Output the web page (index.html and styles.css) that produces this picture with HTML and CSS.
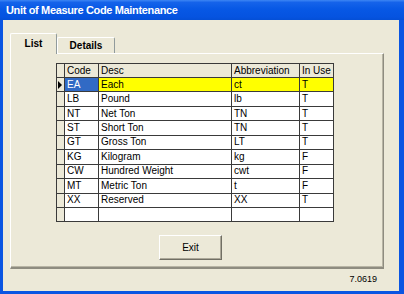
FILE: index.html
```
<!DOCTYPE html>
<html>
<head>
<meta charset="utf-8">
<link rel="stylesheet" href="styles.css">
</head>
<body>
<div class="window">
  <div class="titlebar">Unit of Measure Code Maintenance</div>
  <div class="frame">
    <div class="client">
      <div class="tabs">
        <div class="tab active">List</div>
        <div class="tab">Details</div>
      </div>
      <div class="panel">
        <table class="grid">
          <colgroup>
            <col class="c-ind"><col class="c-code"><col class="c-desc"><col class="c-abbr"><col class="c-use">
          </colgroup>
          <thead>
            <tr><th class="ind"></th><th>Code</th><th>Desc</th><th>Abbreviation</th><th>In Use</th></tr>
          </thead>
          <tbody>
            <tr class="sel"><td class="ind"><span class="arrow"></span></td><td class="cur">EA</td><td class="hl">Each</td><td class="hl">ct</td><td class="hl">T</td></tr>
            <tr><td class="ind"></td><td>LB</td><td>Pound</td><td>lb</td><td>T</td></tr>
            <tr><td class="ind"></td><td>NT</td><td>Net Ton</td><td>TN</td><td>T</td></tr>
            <tr><td class="ind"></td><td>ST</td><td>Short Ton</td><td>TN</td><td>T</td></tr>
            <tr><td class="ind"></td><td>GT</td><td>Gross Ton</td><td>LT</td><td>T</td></tr>
            <tr><td class="ind"></td><td>KG</td><td>Kilogram</td><td>kg</td><td>F</td></tr>
            <tr><td class="ind"></td><td>CW</td><td>Hundred Weight</td><td>cwt</td><td>F</td></tr>
            <tr><td class="ind"></td><td>MT</td><td>Metric Ton</td><td>t</td><td>F</td></tr>
            <tr><td class="ind"></td><td>XX</td><td>Reserved</td><td>XX</td><td>T</td></tr>
            <tr><td class="ind"></td><td></td><td></td><td></td><td></td></tr>
          </tbody>
        </table>
        <button class="btn">Exit</button>
      </div>
      <div class="version">7.0619</div>
    </div>
  </div>
</div>
</body>
</html>
```
FILE: styles.css
```
html, body {
  margin: 0;
  padding: 0;
  background: #0a55e2;
}
.window {
  width: 404px;
  height: 294px;
  display: flex;
  flex-direction: column;
  background: #0a55e2;
  font-family: "Liberation Sans", Arial, sans-serif;
  overflow: hidden;
}
.titlebar {
  height: 20px;
  line-height: 20px;
  padding-left: 6px;
  color: #ffffff;
  font-weight: bold;
  font-size: 11px;
  letter-spacing: -0.35px;
  background: linear-gradient(to bottom, #3d86f4 0%, #1563ea 12%, #0758e5 45%, #0553e0 85%, #044fd6 100%);
}
.frame {
  flex: 1;
  display: flex;
  padding: 0 5px 3px 3px;
}
.client {
  flex: 1;
  background: #ece9d8;
  padding: 13px 0 0 7px;
}
.tabs {
  display: flex;
  align-items: flex-end;
  height: 20px;
  position: relative;
  z-index: 2;
}
.tab {
  box-sizing: border-box;
  background: #ece9d8;
  border-left: 1px solid #ffffff;
  border-top: 1px solid #ffffff;
  border-right: 1px solid #919b9c;
  border-radius: 2px 2px 0 0;
  font-size: 10px;
  font-weight: bold;
  color: #000;
  display: flex;
  align-items: center;
  justify-content: center;
  width: 58px;
  height: 16px;
}
.tab.active {
  width: 47px;
  height: 21px;
  margin-bottom: -1px;
  padding-bottom: 2px;
}
.panel {
  box-sizing: border-box;
  width: 374px;
  height: 216px;
  border-top: 1px solid #ffffff;
  border-left: 1px solid #ffffff;
  border-right: 1px solid #8e8c80;
  border-bottom: 2px solid #8e8c80;
  box-shadow: inset -1px -1px 0 #b8b5a5;
  padding: 9px 0 0 45px;
  display: flex;
  flex-direction: column;
  align-items: flex-start;
}
.grid {
  border-collapse: collapse;
  table-layout: fixed;
  width: 278px;
  font-size: 10px;
  color: #000;
  background: #ffffff;
}
.c-ind { width: 8px; }
.c-code { width: 34px; }
.c-desc { width: 133px; }
.c-abbr { width: 68px; }
.c-use { width: 34px; }
.grid th, .grid td {
  border: 1px solid #3a3a3a;
  padding: 0 0 0 2px;
  text-align: left;
  font-weight: normal;
  white-space: nowrap;
  overflow: hidden;
  line-height: 12px;
}
.grid thead tr { height: 14px; }
.grid thead th { background: #ece9d8; }
.grid tbody tr { height: 14.45px; }
.grid .ind {
  background: #ece9d8;
  padding: 0;
  position: relative;
}
.grid td.cur {
  background: #316ac5;
  color: #ffffff;
}
.grid td.hl {
  background: #ffff00;
}
.arrow {
  display: block;
  width: 0;
  height: 0;
  margin-left: 1px;
  border-top: 4px solid transparent;
  border-bottom: 4px solid transparent;
  border-left: 4px solid #000;
}
.btn {
  box-sizing: border-box;
  margin: 13px 0 0 103px;
  width: 63px;
  height: 25px;
  background: #ece9d8;
  border-top: 1px solid #ffffff;
  border-left: 1px solid #ffffff;
  border-right: 1px solid #716f64;
  border-bottom: 1px solid #716f64;
  box-shadow: inset -1px -1px 0 #aca899;
  font-family: "Liberation Sans", Arial, sans-serif;
  font-size: 10px;
  color: #000;
  padding: 0;
}
.version {
  width: 374px;
  box-sizing: border-box;
  text-align: right;
  padding-right: 7px;
  margin-top: 5px;
  font-size: 9px;
  color: #000;
}
```
